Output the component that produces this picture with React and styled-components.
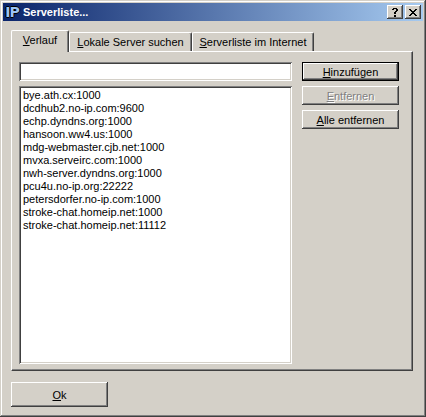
import React from "react";
import styled, { createGlobalStyle } from "styled-components";

const Global = createGlobalStyle`
  html, body { margin: 0; padding: 0; background: #d4d0c8; }
  body { font-family: "Liberation Sans", Arial, sans-serif; font-size: 11px; color: #000; }
`;

const Window = styled.div`
  width: 426px;
  height: 417px;
  box-sizing: border-box;
  padding: 3px;
  background: #d4d0c8;
  box-shadow: inset -1px -1px #404040, inset 1px 1px #d4d0c8,
    inset -2px -2px #808080, inset 2px 2px #ffffff;
  display: flex;
  flex-direction: column;
`;

const TitleBar = styled.div`
  height: 18px;
  margin-bottom: 1px;
  background: linear-gradient(to right, #0a246a, #a6caf0);
  display: flex;
  align-items: center;
  padding: 0 2px 0 1px;
`;

const AppIcon = styled.span`
  width: 16px;
  height: 16px;
  display: flex;
  align-items: center;
  justify-content: center;
  font-family: "DejaVu Sans", sans-serif;
  font-weight: bold;
  font-size: 14px;
  letter-spacing: -1px;
  color: #9cc4f4;
  text-shadow: 1px 0 #000, -1px 0 #000, 0 1px #000, 0 -1px #000;
  line-height: 16px;
`;

const Title = styled.span`
  margin-left: 3px;
  color: #fff;
  font-weight: bold;
  font-size: 11px;
  flex: 1;
`;

const CapButton = styled.span`
  width: 16px;
  height: 14px;
  box-sizing: border-box;
  background: #d4d0c8;
  box-shadow: inset -1px -1px #404040, inset 1px 1px #ffffff,
    inset -2px -2px #808080, inset 2px 2px #d4d0c8;
  display: flex;
  align-items: center;
  justify-content: center;
  margin-left: ${(p) => p.$gap || 0}px;
`;

const Client = styled.div`
  flex: 1;
  display: flex;
  flex-direction: column;
  padding: 8px 10px 0 8px;
`;

const TabRow = styled.div`
  display: flex;
  align-items: flex-end;
  height: 21px;
  position: relative;
  z-index: 1;
`;

const Tab = styled.div`
  box-sizing: border-box;
  height: ${(p) => (p.$active ? 22 : 19)}px;
  width: ${(p) => p.$w}px;
  background: #d4d0c8;
  border-top: 1px solid #fff;
  border-left: 1px solid #fff;
  border-right: 1px solid #404040;
  box-shadow: inset -1px 0 #808080;
  border-radius: 2px 2px 0 0;
  display: flex;
  align-items: center;
  justify-content: center;
  padding-bottom: ${(p) => (p.$active ? 3 : 1)}px;
  margin-bottom: ${(p) => (p.$active ? -1 : 0)}px;
  white-space: nowrap;
`;

const Panel = styled.div`
  height: 320px;
  box-sizing: border-box;
  border-top: 1px solid #fff;
  border-left: 1px solid #fff;
  border-right: 1px solid #404040;
  border-bottom: 1px solid #404040;
  box-shadow: inset -1px -1px #808080;
  display: flex;
  padding: 10px 0 0 7px;
  gap: 10px;
`;

const LeftCol = styled.div`
  width: 273px;
  display: flex;
  flex-direction: column;
  gap: 5px;
`;

const Sunken = styled.div`
  box-sizing: border-box;
  background: #fff;
  box-shadow: inset 1px 1px #808080, inset -1px -1px #fff,
    inset 2px 2px #404040, inset -2px -2px #d4d0c8;
`;

const Input = styled(Sunken)`
  height: 19px;
`;

const List = styled(Sunken)`
  height: 278px;
  padding: 3px 4px;
  line-height: 13px;
`;

const ButtonCol = styled.div`
  display: flex;
  flex-direction: column;
  gap: 5px;
`;

const Button = styled.div`
  box-sizing: border-box;
  width: ${(p) => p.$w || 97}px;
  height: ${(p) => p.$h || 19}px;
  background: #d4d0c8;
  display: flex;
  align-items: center;
  justify-content: center;
  color: ${(p) => (p.$disabled ? "#808080" : "#000")};
  text-shadow: ${(p) => (p.$disabled ? "1px 1px #fff" : "none")};
  border: ${(p) => (p.$default ? "1px solid #000" : "none")};
  box-shadow: ${(p) =>
    p.$default
      ? "inset -1px -1px #404040, inset 1px 1px #fff, inset -2px -2px #808080"
      : "inset -1px -1px #404040, inset 1px 1px #fff, inset -2px -2px #808080, inset 2px 2px #d4d0c8"};
`;

const Footer = styled.div`
  padding-top: 11px;
`;

const U = styled.span`
  text-decoration: underline;
`;

const Item = styled.div`
  white-space: nowrap;
`;

const servers = [
  "bye.ath.cx:1000",
  "dcdhub2.no-ip.com:9600",
  "echp.dyndns.org:1000",
  "hansoon.ww4.us:1000",
  "mdg-webmaster.cjb.net:1000",
  "mvxa.serveirc.com:1000",
  "nwh-server.dyndns.org:1000",
  "pcu4u.no-ip.org:22222",
  "petersdorfer.no-ip.com:1000",
  "stroke-chat.homeip.net:1000",
  "stroke-chat.homeip.net:11112",
];

export default function App() {
  return (
    <>
      <Global />
      <Window>
        <TitleBar>
          <AppIcon>IP</AppIcon>
          <Title>Serverliste...</Title>
          <CapButton>
            <svg width="6" height="9" viewBox="0 0 6 9" shapeRendering="crispEdges">
              <path d="M1 0h4v1H1zM0 1h2v1H0zM4 1h2v2H4zM3 3h2v1H3zM2 4h2v2H2zM2 7h2v2H2z" fill="#000" />
            </svg>
          </CapButton>
          <CapButton $gap={2}>
            <svg width="8" height="7" viewBox="0 0 8 7" shapeRendering="crispEdges">
              <path d="M0 0h2v1H0zM6 0h2v1H6zM1 1h2v1H1zM5 1h2v1H5zM2 2h4v1H2zM3 3h2v1H3zM2 4h4v1H2zM1 5h2v1H1zM5 5h2v1H5zM0 6h2v1H0zM6 6h2v1H6z" fill="#000" />
            </svg>
          </CapButton>
        </TitleBar>
        <Client>
          <TabRow>
            <Tab $active $w={58}>
              <span><U>V</U>erlauf</span>
            </Tab>
            <Tab $w={123}>
              <span><U>L</U>okale Server suchen</span>
            </Tab>
            <Tab $w={122}>
              <span><U>S</U>erverliste im Internet</span>
            </Tab>
          </TabRow>
          <Panel>
            <LeftCol>
              <Input />
              <List>
                {servers.map((s) => (
                  <Item key={s}>{s}</Item>
                ))}
              </List>
            </LeftCol>
            <ButtonCol>
              <Button $default>
                <span><U>H</U>inzufügen</span>
              </Button>
              <Button $disabled>
                <span><U>E</U>ntfernen</span>
              </Button>
              <Button>
                <span><U>A</U>lle entfernen</span>
              </Button>
            </ButtonCol>
          </Panel>
          <Footer>
            <Button $w={97} $h={25}>
              <span><U>O</U>k</span>
            </Button>
          </Footer>
        </Client>
      </Window>
    </>
  );
}
